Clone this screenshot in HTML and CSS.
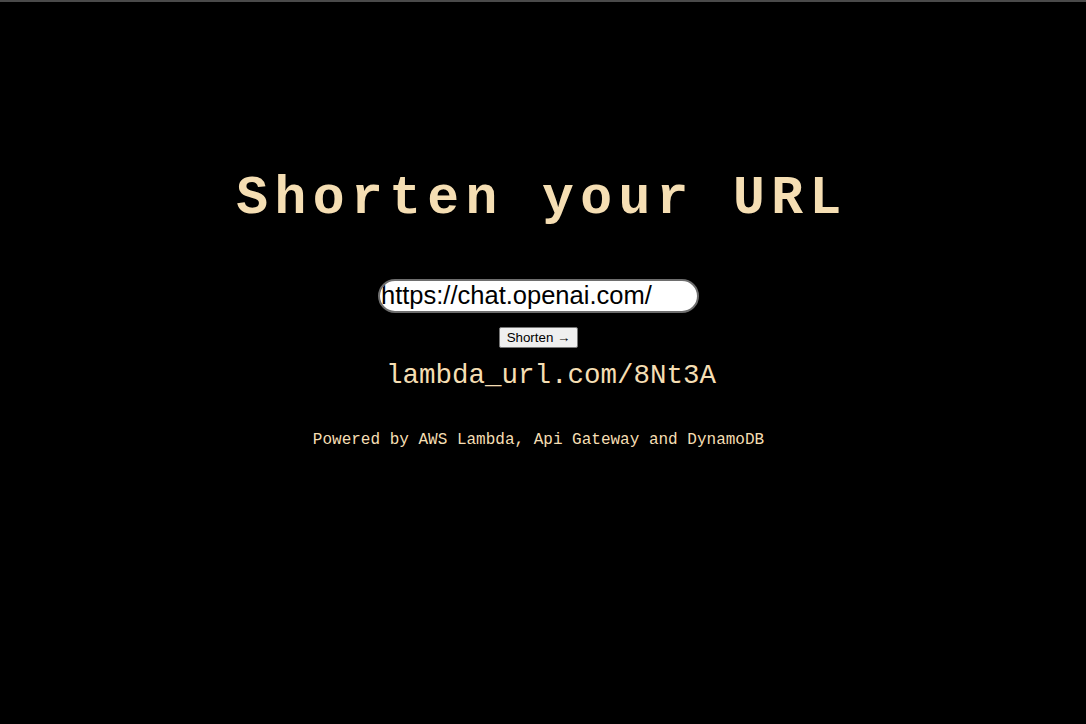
FILE: index.html
```html
<!DOCTYPE html>
<html lang="en">
<head>
<meta charset="utf-8">
<title>URL Shortener</title>
<link rel="stylesheet" href="styles.css">
</head>
<body>
<main class="page">
  <h1 class="title">Shorten your URL</h1>
  <form class="form">
    <input class="url-input" type="text" value="https://chat.openai.com/">
    <button class="btn" type="button">Shorten &rarr;</button>
  </form>
  <p class="result">lambda_url.com/8Nt3A</p>
  <p class="footer">Powered by AWS Lambda, Api Gateway and DynamoDB</p>
</main>
</body>
</html>
```
FILE: styles.css
```css
html, body {
  margin: 0;
  padding: 0;
  background: #000;
  height: 100%;
}
body {
  border-top: 2px solid #4a4a4a;
  box-sizing: border-box;
}
.page {
  display: flex;
  flex-direction: column;
  align-items: center;
  padding: 166px 9px 0 0;
}
.title {
  margin: 0;
  padding-left: 7px;
  font-family: "Liberation Mono", "Courier New", monospace;
  font-weight: bold;
  font-size: 53px;
  letter-spacing: 6.4px;
  line-height: 62px;
  color: #f5deb3;
}
.form {
  display: flex;
  flex-direction: column;
  align-items: center;
  margin-top: 49px;
}
.url-input {
  box-sizing: border-box;
  width: 321px;
  height: 34px;
  padding: 0 0 2px 1px;
  border: 2px solid #6e6e6e;
  border-radius: 17px;
  background: #fff;
  color: #000;
  font-family: "Liberation Sans", Arial, sans-serif;
  font-size: 25.5px;
  outline: none;
}
.btn {
  margin-top: 14px;
  font-family: "Liberation Sans", Arial, sans-serif;
  font-size: 13.33px;
  color: #000;
  background: #efefef;
  border: 1px solid #767676;
  border-radius: 2px;
  padding: 0 7px;
  height: 21px;
  white-space: nowrap;
}
.result {
  margin: 12px 0 0 25px;
  font-family: "Liberation Mono", "Courier New", monospace;
  font-size: 27.5px;
  line-height: 32px;
  color: #f5deb3;
}
.footer {
  margin: 39px 0 0;
  font-family: "Liberation Mono", "Courier New", monospace;
  font-size: 16px;
  line-height: 18px;
  color: #f5deb3;
}
```
